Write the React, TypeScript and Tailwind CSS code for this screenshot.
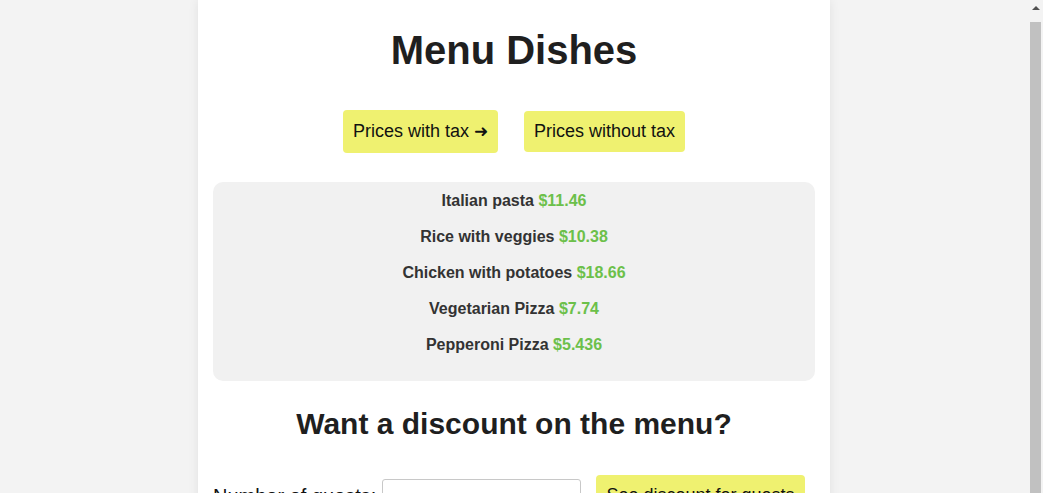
import React, { useState } from "react";

type Dish = {
    name: string;
    price: number;
};

const dishes: Dish[] = [
    { name: "Italian pasta", price: 11.46 },
    { name: "Rice with veggies", price: 10.38 },
    { name: "Chicken with potatoes", price: 18.66 },
    { name: "Vegetarian Pizza", price: 7.74 },
    { name: "Pepperoni Pizza", price: 5.436 },
];

export default function App() {
    const [guests, setGuests] = useState("");

    return (
        <div className="flex h-screen overflow-hidden bg-[#f3f3f3] font-['Liberation_Sans',Arial,sans-serif] text-[#1f1f1f]">
            <div className="flex-1">
                <div className="mx-auto w-[632px] bg-white px-[15px] pt-[27px] pb-[30px] shadow-[0_0_10px_rgba(0,0,0,0.08)]">
                    <h1 className="text-center text-[40px] font-bold leading-[46px]">Menu Dishes</h1>

                    {/* tax toggle */}
                    <div className="mt-[37px] flex items-center justify-center gap-[26px]">
                        <button className="rounded-[4px] bg-[#eff170] px-[10px] py-[10px] text-[18px] leading-[22px] text-[#111]">
                            Prices with tax <span className="text-[17px]">➜</span>
                        </button>
                        <button className="rounded-[4px] bg-[#eff170] px-[10px] py-[10px] text-[18px] leading-[21px] text-[#111]">
                            Prices without tax
                        </button>
                    </div>

                    {/* dishes */}
                    <div className="mt-[29px] rounded-[10px] bg-[#f1f1f1] pt-[10px] pb-[9px]">
                        {dishes.map((dish) => (
                            <p key={dish.name} className="mb-[18px] text-center text-[16px] font-bold leading-[18px] text-[#333]">
                                {dish.name} <span className="text-[#6cc04a]">${dish.price}</span>
                            </p>
                        ))}
                    </div>

                    <h2 className="mt-[26px] text-center text-[30px] font-bold leading-[34px]">Want a discount on the menu?</h2>

                    {/* discount form */}
                    <div className="mt-[34px] flex items-center">
                        <label className="text-[20px] text-[#111]">Number of guests:</label>
                        <input
                            type="number"
                            value={guests}
                            onChange={(e) => setGuests(e.target.value)}
                            className="ml-[6px] h-[34px] w-[199px] rounded-[3px] border border-[#c8c8c8] px-2 text-[16px]"
                        />
                        <button className="ml-[15px] rounded-[4px] bg-[#eff170] px-[10px] py-[10px] text-[18px] leading-[21px] text-[#111]">
                            See discount for guests
                        </button>
                    </div>
                </div>
            </div>

            {/* window scrollbar */}
            <div className="flex w-[15px] flex-col items-center bg-[#f3f3f3]">
                <div className="mt-[6px] h-0 w-0 border-x-[4px] border-b-[4px] border-x-transparent border-b-[#505050]" />
                <div className="mt-[12px] w-[11px] flex-1 bg-[#c1c1c1]" />
            </div>
        </div>
    );
}
